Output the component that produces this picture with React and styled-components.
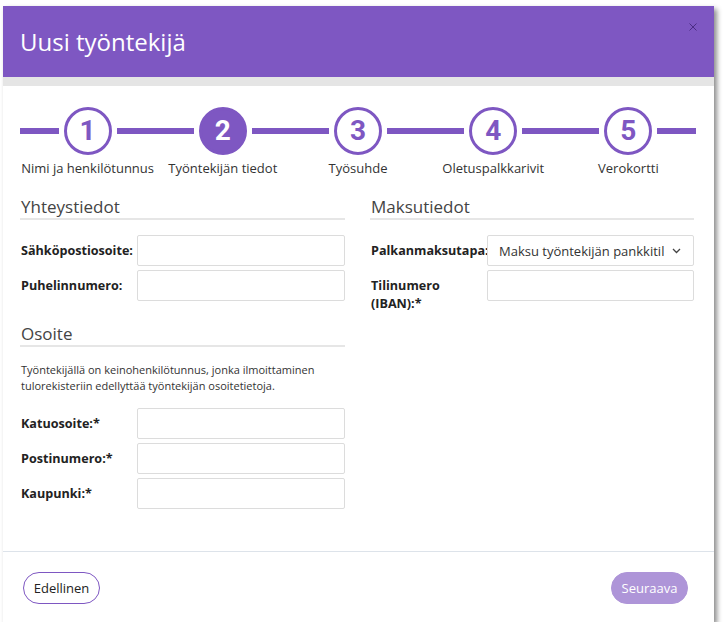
import React from "react";
import styled, { createGlobalStyle } from "styled-components";

const GlobalStyle = createGlobalStyle`
  html, body {
    margin: 0;
    padding: 0;
    background: #ffffff;
  }
  * {
    box-sizing: border-box;
  }
`;

const Page = styled.div`
  padding: 6px 0 0 3px;
  font-family: "Open Sans", "Liberation Sans", sans-serif;
`;

const Modal = styled.div`
  width: 711px;
  height: 616px;
  background: #fff;
  display: flex;
  flex-direction: column;
  box-shadow: 3px 3px 5px rgba(0, 0, 0, 0.45);
`;

const Header = styled.header`
  height: 71px;
  background: #7e57c2;
  display: flex;
  align-items: center;
  justify-content: space-between;
  padding: 0 17px;
  border-bottom: 9px solid #e5e5e5;
  box-sizing: content-box;
`;

const Title = styled.h1`
  margin: 0;
  font-size: 24px;
  font-weight: 400;
  color: #fff;
`;

const Close = styled.button`
  align-self: flex-start;
  margin-top: 16px;
  margin-right: -1px;
  width: 10px;
  height: 10px;
  padding: 0;
  border: none;
  background: none;
  display: flex;
  align-items: center;
  justify-content: center;
`;

const Body = styled.div`
  flex: 1;
  padding: 21px 20px 0 17px;
`;

const Stepper = styled.div`
  display: grid;
  grid-template-columns: repeat(5, 1fr);
  width: 676px;
`;

const Step = styled.div`
  display: flex;
  flex-direction: column;
  align-items: center;
`;

const Track = styled.div`
  display: flex;
  align-items: center;
  gap: 5px;
  width: 100%;
`;

const Line = styled.div`
  flex: 1;
  height: 6px;
  background: #7e57c2;
`;

const Circle = styled.div`
  width: 48px;
  height: 48px;
  border-radius: 50%;
  border: 3px solid #7e57c2;
  background: ${(p) => (p.$active ? "#7e57c2" : "#fff")};
  color: ${(p) => (p.$active ? "#fff" : "#7e57c2")};
  display: flex;
  align-items: center;
  justify-content: center;
  font-family: Roboto, "Liberation Sans", sans-serif;
  font-weight: 700;
  font-size: 28px;
  line-height: 1;
`;

const StepLabel = styled.div`
  margin-top: 4px;
  font-size: 13px;
  line-height: 18px;
  color: #333;
  white-space: nowrap;
`;

const Columns = styled.div`
  display: grid;
  grid-template-columns: 325px 324px;
  gap: 25px;
  margin-top: 18px;
`;

const Column = styled.div`
  display: flex;
  flex-direction: column;
`;

const Section = styled.section`
  margin-top: ${(p) => p.$top || 0}px;
`;

const SectionTitle = styled.h2`
  margin: 0 0 15px;
  padding-left: 1px;
  font-size: 17px;
  font-weight: 400;
  line-height: 23px;
  color: #444;
  border-bottom: 2px solid #e6e6e6;
  height: 25px;
`;

const Note = styled.p`
  margin: 0 0 14px;
  padding-left: 1px;
  font-size: 11px;
  line-height: 16px;
  color: #333;
`;

const Rows = styled.div`
  display: flex;
  flex-direction: column;
  gap: 4px;
`;

const Row = styled.div`
  display: flex;
  align-items: ${(p) => (p.$top ? "flex-start" : "center")};
`;

const Label = styled.label`
  width: 117px;
  flex: none;
  padding-left: 1px;
  font-size: 12.6px;
  font-weight: 700;
  line-height: 18px;
  color: #222;
  white-space: ${(p) => (p.$wrap ? "normal" : "nowrap")};
  padding-top: ${(p) => (p.$wrap ? "7px" : "0")};
`;

const Input = styled.input`
  flex: 1;
  min-width: 0;
  height: 31px;
  border: 1px solid #dcdcdc;
  border-radius: 2px;
  background: #fff;
  font-family: inherit;
  font-size: 13px;
  padding: 0 10px;
`;

const Select = styled.div`
  flex: 1;
  min-width: 0;
  height: 31px;
  border: 1px solid #dcdcdc;
  border-radius: 2px;
  background: #fff;
  display: flex;
  align-items: center;
  padding: 0 12px 0 11px;
  gap: 8px;
  position: relative;
  z-index: 1;
`;

const SelectText = styled.span`
  flex: 1;
  overflow: hidden;
  white-space: nowrap;
  font-size: 13px;
  color: #333;
`;

const Footer = styled.footer`
  border-top: 1px solid #dde3ea;
  display: flex;
  justify-content: space-between;
  padding: 20px 26px 18px 20px;
`;

const Button = styled.button`
  height: 32px;
  width: 77px;
  border-radius: 16px;
  font-family: inherit;
  font-size: 13px;
  border: 1px solid ${(p) => (p.$primary ? "#ae95d8" : "#7e57c2")};
  background: ${(p) => (p.$primary ? "#ae95d8" : "#fff")};
  color: ${(p) => (p.$primary ? "#fff" : "#222")};
  padding: 0;
`;

const steps = [
  "Nimi ja henkilötunnus",
  "Työntekijän tiedot",
  "Työsuhde",
  "Oletuspalkkarivit",
  "Verokortti",
];

export default function App() {
  return (
    <Page>
      <GlobalStyle />
      <Modal>
        <Header>
          <Title>Uusi työntekijä</Title>
          <Close aria-label="Sulje">
            <svg width="8" height="8" viewBox="0 0 8 8">
              <path d="M0.5 0.5L7.5 7.5M7.5 0.5L0.5 7.5" stroke="#4b2d84" strokeWidth="1" />
            </svg>
          </Close>
        </Header>
        <Body>
          <Stepper>
            {steps.map((s, i) => (
              <Step key={s}>
                <Track>
                  <Line />
                  <Circle $active={i === 1}>{i + 1}</Circle>
                  <Line />
                </Track>
                <StepLabel>{s}</StepLabel>
              </Step>
            ))}
          </Stepper>
          <Columns>
            <Column>
              <Section>
                <SectionTitle>Yhteystiedot</SectionTitle>
                <Rows>
                  <Row>
                    <Label>Sähköpostiosoite:</Label>
                    <Input />
                  </Row>
                  <Row>
                    <Label>Puhelinnumero:</Label>
                    <Input />
                  </Row>
                </Rows>
              </Section>
              <Section $top={21}>
                <SectionTitle>Osoite</SectionTitle>
                <Note>
                  Työntekijällä on keinohenkilötunnus, jonka ilmoittaminen
                  <br />
                  tulorekisteriin edellyttää työntekijän osoitetietoja.
                </Note>
                <Rows>
                  <Row>
                    <Label>Katuosoite:*</Label>
                    <Input />
                  </Row>
                  <Row>
                    <Label>Postinumero:*</Label>
                    <Input />
                  </Row>
                  <Row>
                    <Label>Kaupunki:*</Label>
                    <Input />
                  </Row>
                </Rows>
              </Section>
            </Column>
            <Column>
              <Section>
                <SectionTitle>Maksutiedot</SectionTitle>
                <Rows>
                  <Row>
                    <Label>Palkanmaksutapa:</Label>
                    <Select>
                      <SelectText>Maksu työntekijän pankkitilille</SelectText>
                      <svg width="9" height="6" viewBox="0 0 9 6">
                        <path d="M1 1L4.5 4.5L8 1" stroke="#444" strokeWidth="1.3" fill="none" />
                      </svg>
                    </Select>
                  </Row>
                  <Row $top>
                    <Label $wrap>Tilinumero (IBAN):*</Label>
                    <Input />
                  </Row>
                </Rows>
              </Section>
            </Column>
          </Columns>
        </Body>
        <Footer>
          <Button>Edellinen</Button>
          <Button $primary>Seuraava</Button>
        </Footer>
      </Modal>
    </Page>
  );
}
